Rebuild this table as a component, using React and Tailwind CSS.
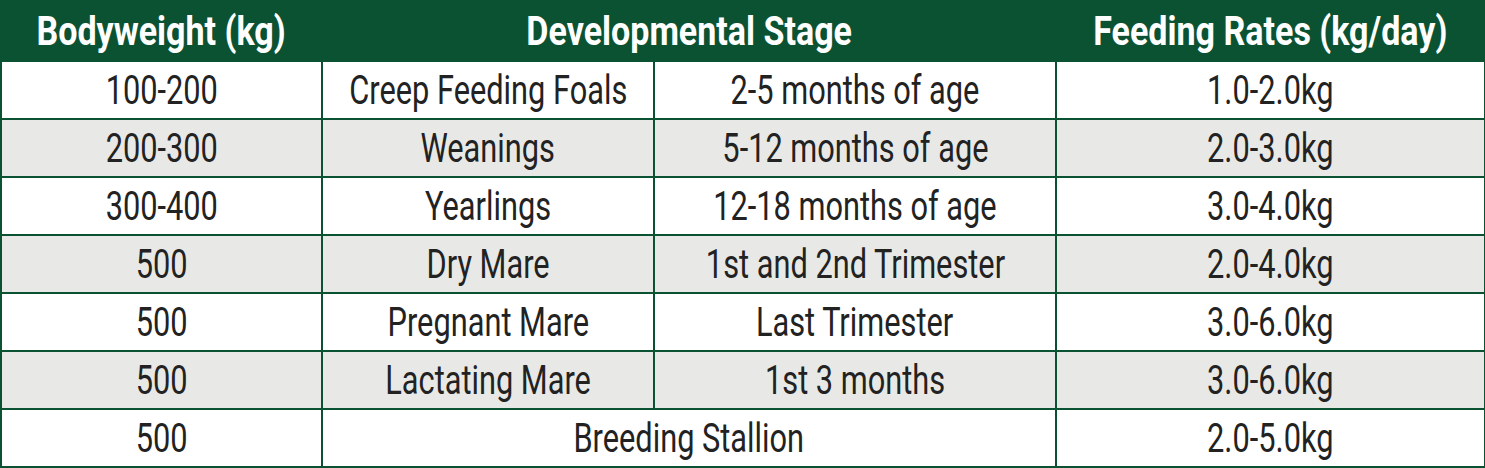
const rows = [
  { w: "100-200", stage: "Creep Feeding Foals", age: "2-5 months of age", rate: "1.0-2.0kg" },
  { w: "200-300", stage: "Weanings", age: "5-12 months of age", rate: "2.0-3.0kg" },
  { w: "300-400", stage: "Yearlings", age: "12-18 months of age", rate: "3.0-4.0kg" },
  { w: "500", stage: "Dry Mare", age: "1st and 2nd Trimester", rate: "2.0-4.0kg" },
  { w: "500", stage: "Pregnant Mare", age: "Last Trimester", rate: "3.0-6.0kg" },
  { w: "500", stage: "Lactating Mare", age: "1st 3 months", rate: "3.0-6.0kg" },
  { w: "500", stage: "Breeding Stallion", rate: "2.0-5.0kg", span: true },
];

// condensed look: no narrow font installed, so squeeze Roboto horizontally
function T({ children, head }) {
  return (
    <div className="flex justify-center">
      <span className={`inline-block whitespace-nowrap ${head ? "scale-x-[0.83]" : "scale-x-[0.75]"}`}>
        {children}
      </span>
    </div>
  );
}

export default function App() {
  const cell = "border-2 border-[#0b5233] text-center align-middle p-0 whitespace-nowrap overflow-hidden";
  return (
    <div className="w-[1485px] h-[468px] bg-white font-['Roboto',sans-serif]">
      <table className="w-[1484px] border-collapse table-fixed text-[#222222] text-[41px] leading-none">
        <colgroup>
          <col className="w-[321px]" />
          <col className="w-[332px]" />
          <col className="w-[402px]" />
          <col className="w-[429px]" />
        </colgroup>
        <thead>
          <tr className="h-[60px] bg-[#0b5233] text-white font-bold">
            <th className={cell}><T head>Bodyweight (kg)</T></th>
            <th className={cell} colSpan={2}><T head>Developmental Stage</T></th>
            <th className={cell}><T head>Feeding Rates (kg/day)</T></th>
          </tr>
        </thead>
        <tbody>
          {rows.map((r, i) => (
            <tr key={i} className={`h-[58px] ${i % 2 ? "bg-[#e8e9e6]" : "bg-white"}`}>
              <td className={cell}><T>{r.w}</T></td>
              {r.span ? (
                <td className={cell} colSpan={2}><T>{r.stage}</T></td>
              ) : (
                <>
                  <td className={cell}><T>{r.stage}</T></td>
                  <td className={cell}><T>{r.age}</T></td>
                </>
              )}
              <td className={cell}><T>{r.rate}</T></td>
            </tr>
          ))}
        </tbody>
      </table>
    </div>
  );
}
